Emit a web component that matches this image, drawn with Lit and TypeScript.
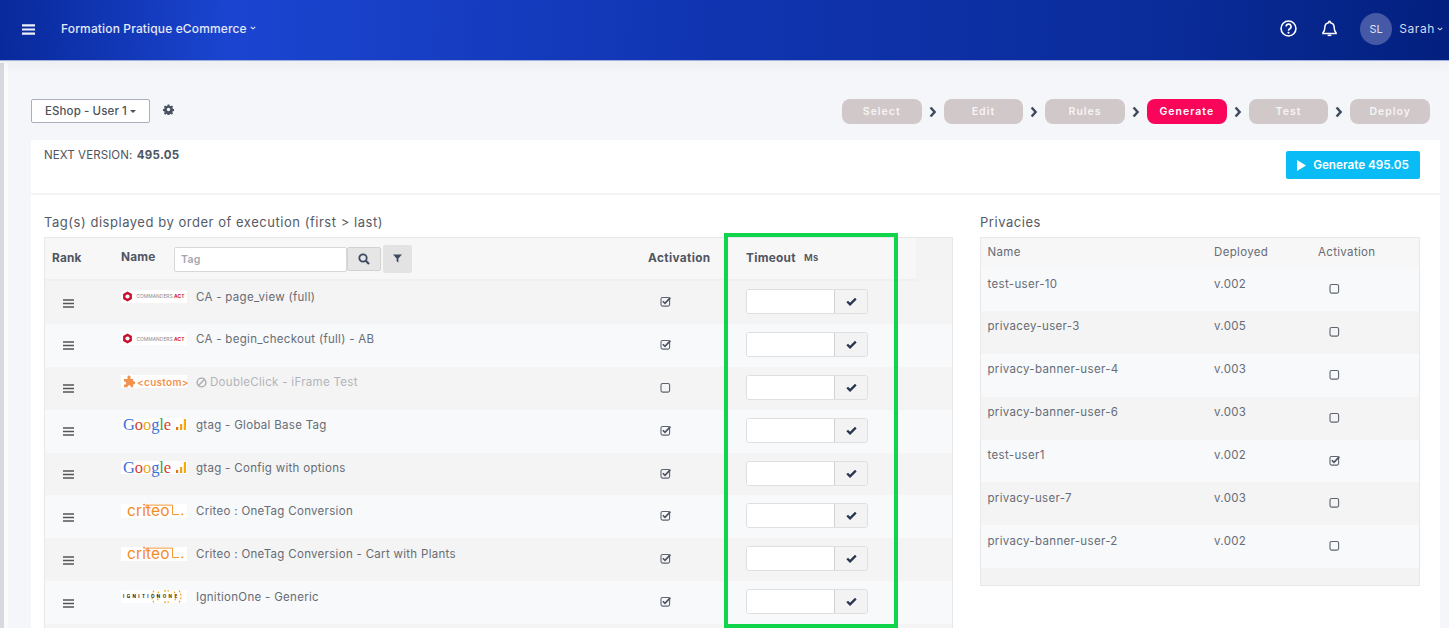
import { LitElement, html, css, svg } from "lit";
import { customElement } from "lit/decorators.js";

const burger = html`<svg class="burger" viewBox="0 0 11 9" width="11" height="9"><path d="M0 1h11M0 4.500h11M0 8h11" stroke="#555" stroke-width="1.500"/></svg>`;
const check = html`<svg viewBox="0 0 12 10" width="11" height="9"><path d="M1.200 5l3.200 3.200L10.800 1.800" fill="none" stroke="#2a3650" stroke-width="2.600"/></svg>`;
const box = (on: boolean) => html`<svg class="box" viewBox="0 0 11 11" width="11" height="11"><rect x="1" y="1.500" width="8.600" height="8.600" rx="1.600" fill="none" stroke="#5d6470" stroke-width="1.100"/>${on ? svg`<path d="M2.800 5.200l2.200 2.200L10.400 1.600" fill="none" stroke="#4b5260" stroke-width="1.600"/>` : ""}</svg>`;
const chev = html`<svg class="chev" viewBox="0 0 8 11" width="8" height="12"><path d="M1.600 1l4 4.500-4 4.500" fill="none" stroke="#3f4a60" stroke-width="2.500"/></svg>`;
const mini = html`<svg viewBox="0 0 8 5" width="6" height="4"><path d="M1 1l3 2.600L7 1" fill="none" stroke="currentColor" stroke-width="1.500"/></svg>`;

const commanders = html`<span class="logo"><svg class="hex" viewBox="0 0 10 10" width="11" height="11"><path d="M5 .5l4 2.200v4.600L5 9.500 1 7.300V2.700z" fill="#c8102e"/><circle cx="5" cy="5" r="1.900" fill="#fff"/></svg><span class="ca">COMMANDERS <b>ACT</b></span></span>`;
const custom = html`<span class="logo"><svg viewBox="0 0 14 14" width="15" height="14"><path d="M5 1.500a1.600 1.600 0 0 1 3 0V4h2.600v2.300a1.600 1.600 0 1 1 0 3v3H8.200a1.600 1.600 0 1 0-3 0H1.500V9.600a1.600 1.600 0 1 0 0-3V4H5z" fill="#f3914d"/></svg><span class="cu">&lt;custom&gt;</span></span>`;
const bars = html`<svg viewBox="0 0 10 11" width="10" height="11"><rect x="0" y="8" width="2.200" height="3" fill="#e8710a"/><rect x="4" y="5" width="2.200" height="6" fill="#f0a020"/><rect x="7.800" y="0" width="2.400" height="11" fill="#f9ab00"/></svg>`;
const google = html`<span class="logo g"><span class="go"><i class="b">G</i><i class="r">o</i><i class="y">o</i><i class="b">g</i><i class="gr">l</i><i class="r">e</i></span>${bars}</span>`;
const criteo = html`<span class="logo cr"><span class="crt">criteo</span><svg viewBox="0 0 66 13" width="66" height="14"><path d="M25 3V.6h26.500V10H58" fill="none" stroke="#f48b1f" stroke-width=".9"/><rect x="60.500" y="9" width="1.700" height="1.700" fill="#f48b1f"/></svg></span>`;
const ignition = html`<span class="logo ig"><svg viewBox="0 0 66 13" width="66" height="13"><g fill="none" stroke="#e9a52a" stroke-width="1.200" stroke-dasharray="2 1.500"><path d="M33 .5a10 10 0 0 0 0 12M38 1.500a8 8 0 0 0 0 10M58 .5a10 10 0 0 1 0 12M53 1.500a8 8 0 0 1 0 10M43 .8h5M43 12.200h5"/></g></svg><span class="igt">IGNITION<b>ONE</b></span></span>`;

const tags = [
  { l: commanders, n: "CA - page_view (full)", on: true },
  { l: commanders, n: "CA - begin_checkout (full) - AB", on: true },
  { l: custom, n: "DoubleClick - iFrame Test", on: false, off: true },
  { l: google, n: "gtag - Global Base Tag", on: true },
  { l: google, n: "gtag - Config with options", on: true },
  { l: criteo, n: "Criteo : OneTag Conversion", on: true },
  { l: criteo, n: "Criteo : OneTag Conversion - Cart with Plants", on: true },
  { l: ignition, n: "IgnitionOne - Generic", on: true },
];
const privacies = [
  ["test-user-10", "v.002", false], ["privacey-user-3", "v.005", false], ["privacy-banner-user-4", "v.003", false],
  ["privacy-banner-user-6", "v.003", false], ["test-user1", "v.002", true], ["privacy-user-7", "v.003", false],
  ["privacy-banner-user-2", "v.002", false],
] as [string, string, boolean][];
const steps = ["Select", "Edit", "Rules", "Generate", "Test", "Deploy"];

@customElement("app-root")
export class AppRoot extends LitElement {
  static styles = css`
    :host { display: block; position: relative; height: 628px; overflow: hidden; background: #f5f6f9; font-family: Inter, "Liberation Sans", sans-serif; color: #555b66; }
    * { box-sizing: border-box; }
    .top { position: relative; height: 61px; display: flex; align-items: center; background: linear-gradient(92deg, #08299a 0%, #1b45d1 16%, #1034b0 50%, #0a2c9a 80%, #03207f 100%); color: #e4e8f7; padding: 0 6px 0 22px; border-bottom: 1px solid #9fb0dd; box-shadow: 0 3px 12px rgba(60,70,110,.06); }
    .menu { margin-right: 26px; display: block; margin-top: -2px; }
    .brand { font-size: 12px; font-weight: 500; letter-spacing: .14px; display: flex; align-items: center; gap: 3px; margin-top: -4px; }
    .right { margin-left: auto; display: flex; align-items: center; margin-top: -3px; }
    .bell { margin: 0 23px 0 25px; display: block; }
    .avatar { width: 32px; height: 32px; border-radius: 50%; background: #4559a6; color: #dfe3f2; font-size: 11px; display: flex; align-items: center; justify-content: center; margin-right: 7px; }
    .user { font-size: 12px; letter-spacing: .6px; display: flex; align-items: center; gap: 2px; color: #d3d9ef; }
    .main { display: flex; height: 567px; }
    .rail { width: 8px; background: linear-gradient(90deg, #d6d9dd 0 4px, #fbfbfc 4px); margin-top: 2px; flex: none; }
    .content { flex: 1; padding: 38px 9px 0 23px; min-width: 0; }
    .bar { display: flex; align-items: flex-start; height: 25px; margin-bottom: 16px; }
    .env { width: 119px; height: 24px; background: #fff; border: 1px solid #aab0bb; border-radius: 2px; display: flex; align-items: center; justify-content: center; gap: 3px; font-size: 11.500px; font-weight: 500; letter-spacing: .1px; color: #4d535e; }
    .caret { width: 0; height: 0; border: 3.500px solid transparent; border-top-color: #4d535e; border-bottom: 0; }
    .gear { margin: 5px 0 0 13px; display: block; }
    .steps { margin-left: auto; margin-right: 10px; display: flex; align-items: center; gap: 7px; }
    .step { width: 79.700px; height: 25px; border-radius: 8px; background: #d0c8c9; color: #f7f4f4; font-size: 10.500px; font-weight: 600; letter-spacing: 1px; display: flex; align-items: center; justify-content: center; }
    .step.on { background: #f9065a; color: #fff; }
    .card { background: #fff; height: 520px; }
    .head { height: 55px; border-bottom: 2px solid #f3f3f4; padding: 8px 20px 0 13px; display: flex; justify-content: space-between; align-items: flex-start; }
    .ver { font-size: 11.500px; letter-spacing: .1px; color: #4f5561; line-height: 14px; }
    .ver b { font-weight: 700; letter-spacing: .3px; margin-left: 1px; }
    .gen { width: 134px; height: 28px; margin-top: 3px; background: #0abcf5; color: #fff; border-radius: 2px; font-size: 11.700px; font-weight: 600; display: flex; align-items: center; justify-content: center; gap: 7px; }
    .cols { display: flex; padding: 0 20px 0 13px; gap: 27px; }
    .left { width: 909px; flex: none; }
    .rightc { flex: 1; min-width: 0; }
    h2 { margin: 0; font-size: 13px; font-weight: 400; color: #555b66; height: 42px; padding-top: 20px; line-height: 15px; letter-spacing: .53px; white-space: nowrap; }
    .tbl { border: 1px solid #e7e7e8; background: #f3f3f3; }
    .thead { width: 871px; height: 43px; background: #f7f7f7; border-bottom: 2px solid #f0f0f0; display: grid; grid-template-columns: 76px 527px 98px 1fr; align-items: center; font-size: 11.800px; font-weight: 700; letter-spacing: .2px; color: #4f5561; padding-left: 7px; }
    .rankh { margin-top: -2px; }
    .namehead { display: flex; align-items: center; margin-left: -7px; }
    .namehead span { margin-top: -3px; width: 53px; }
    .search { width: 173px; height: 25px; background: #fff; border: 1px solid #d8d8da; border-radius: 2px; font-size: 10.500px; font-weight: 600; letter-spacing: .3px; color: #a4a8b0; display: flex; align-items: center; padding-left: 6px; margin-top: 2px; }
    .sbtn { width: 34px; height: 24px; background: #e6e6e6; border: 1px solid #d2d2d3; border-radius: 2px; display: flex; align-items: center; justify-content: center; margin-top: 1px; }
    .fbtn { width: 29px; height: 28px; margin-left: 2px; background: #e3e3e3; border-radius: 2px; display: flex; align-items: center; justify-content: center; }
    .acth { margin-left: -7px; letter-spacing: .36px; margin-top: -2px; }
    .toh { margin-left: -7px; display: flex; align-items: center; gap: 8px; letter-spacing: .3px; margin-top: -2px; }
    .toh small { font-size: 9.500px; font-weight: 600; }
    .row { height: 42.900px; display: grid; grid-template-columns: 76px 527px 98px 1fr; background: #f8f9fb; font-size: 11.500px; letter-spacing: .3px; color: #676c76; }
    .row:nth-child(odd) { background: #f4f4f4; }
    .rk { padding: 17.500px 0 0 18px; }
    .burger { display: block; }
    .nm { padding-top: 8.500px; display: flex; align-items: flex-start; gap: 9px; }
    .nm .t { line-height: 14px; display: flex; align-items: center; gap: 3px; white-space: nowrap; }
    .row.dis .t { color: #b3b5ba; }
    .logo { position: relative; width: 66px; height: 13px; background: #fff; display: flex; align-items: center; flex: none; }
    .logo > svg:first-child { margin-left: 1px; flex: none; }
    .ca { font-size: 4.900px; color: #8a8d94; margin-left: 3.500px; letter-spacing: .02px; white-space: nowrap; }
    .ca b { color: #d0172f; }
    .cu { font-size: 10px; color: #f3914d; font-weight: 600; margin-left: 0; }
    .g { justify-content: space-between; padding: 0 1px 0 2px; }
    .go { font-family: "Liberation Serif", serif; font-size: 16.500px; line-height: 13px; letter-spacing: -.1px; }
    .go i { font-style: normal; }
    .go .b { color: #3a6fd8; } .go .r { color: #d8402f; } .go .y { color: #e8a91c; } .go .gr { color: #3f9e45; }
    .cr { height: 14px; }
    .cr > svg:last-child { position: absolute; left: 0; top: 0; }
    .crt { color: #f48b1f; font-size: 15.500px; font-weight: 400; margin-left: 6px; letter-spacing: .1px; line-height: 14px; }
    .ig > svg:first-child { position: absolute; left: 0; top: 0; margin: 0; }
    .igt { position: relative; font-size: 4.500px; font-weight: 700; color: #222; letter-spacing: 2.400px; margin-left: 2px; white-space: nowrap; }
    .igt b { color: #7c5a14; }
    .ac { padding: 15px 0 0 11.500px; }
    .box { display: block; }
    .to { padding: 8px 0 0 0; }
    .ig2 { width: 122px; height: 25px; display: flex; border: 1px solid #dedfe0; border-radius: 3px; overflow: hidden; }
    .ig2 .in { width: 88px; background: #fff; border-right: 1px solid #cfd0d2; }
    .ig2 .ok { flex: 1; background: #f3f3f3; display: flex; align-items: center; justify-content: center; }
    .rt { border: 1px solid #e7e7e8; background: #f3f3f3; height: 349px; }
    .rh, .rr { display: grid; grid-template-columns: 226.500px 104px 1fr; padding-left: 6.500px; font-size: 11.500px; letter-spacing: .33px; color: #676c76; }
    .rh { height: 30px; background: #f7f7f7; align-items: center; padding-bottom: 2px; }
    .rr { height: 42.900px; background: #f4f4f4; padding-top: 8.500px; line-height: 14px; }
    .rr:nth-child(odd) { background: #f8f9fb; }
    .rr .b { padding: 6.500px 0 0 10.500px; }
    .mark { position: absolute; left: 724px; top: 233px; width: 174px; height: 395px; border: 4px solid #10d44b; pointer-events: none; }
  `;

  render() {
    return html`
      <div class="top">
        <svg class="menu" viewBox="0 0 13 11" width="13" height="11"><path d="M0 1.400h13M0 5.500h13M0 9.600h13" stroke="#eef1fb" stroke-width="2.200"/></svg>
        <div class="brand">Formation Pratique eCommerce ${mini}</div>
        <div class="right">
          <svg viewBox="0 0 16 16" width="17" height="17"><circle cx="8" cy="8" r="7" fill="none" stroke="#fff" stroke-width="1.500"/><path d="M5.800 6.200a2.300 2.300 0 1 1 3.400 2c-.8.500-1.200.9-1.200 1.800" fill="none" stroke="#fff" stroke-width="1.500"/><circle cx="8" cy="12" r="1" fill="#fff"/></svg>
          <svg class="bell" viewBox="0 0 16 18" width="15" height="17"><path d="M8 1.200a1 1 0 0 1 1 1v.6c2.500.5 4 2.500 4 5 0 3.500 1 4.800 2 5.800v.6H1v-.6c1-1 2-2.300 2-5.800 0-2.500 1.500-4.500 4-5v-.6a1 1 0 0 1 1-1z" fill="none" stroke="#fff" stroke-width="1.600"/><path d="M6 16.300h4" stroke="#fff" stroke-width="1.600"/></svg>
          <div class="avatar">SL</div>
          <div class="user">Sarah ${mini}</div>
        </div>
      </div>
      <div class="main">
        <div class="rail"></div>
        <div class="content">
          <div class="bar">
            <div class="env">EShop - User 1 <span class="caret"></span></div>
            <svg class="gear" viewBox="0 0 24 24" width="11" height="11"><path d="M10 1h4l.6 3 2 .9 2.600-1.700 2.800 2.800-1.700 2.600.9 2 3 .6v4l-3 .6-.9 2 1.700 2.600-2.800 2.800-2.600-1.700-2 .9-.6 3h-4l-.6-3-2-.9-2.600 1.700-2.800-2.800 1.700-2.600-.9-2-3-.6v-4l3-.6.9-2L2 6l2.800-2.800 2.600 1.700 2-.9z" fill="#4a5160"/><circle cx="12" cy="12" r="3.600" fill="#f5f6f9"/></svg>
            <div class="steps">
              ${steps.map((s, i) => html`${i ? chev : ""}<div class="step ${s === "Generate" ? "on" : ""}">${s}</div>`)}
            </div>
          </div>
          <div class="card">
            <div class="head">
              <div class="ver">NEXT VERSION: <b>495.05</b></div>
              <div class="gen"><svg viewBox="0 0 9 11" width="9" height="11"><path d="M0 0l9 5.500L0 11z" fill="#fff"/></svg>Generate 495.05</div>
            </div>
            <div class="cols">
              <div class="left">
                <h2>Tag(s) displayed by order of execution (first &gt; last)</h2>
                <div class="tbl">
                  <div class="thead">
                    <div class="rankh">Rank</div>
                    <div class="namehead"><span>Name</span>
                      <div class="search">Tag</div>
                      <div class="sbtn"><svg viewBox="0 0 12 12" width="12" height="12"><circle cx="5" cy="5" r="3.700" fill="none" stroke="#3f4a60" stroke-width="1.800"/><path d="M7.800 7.800L11 11" stroke="#3f4a60" stroke-width="2.200"/></svg></div>
                      <div class="fbtn"><svg viewBox="0 0 10 10" width="9" height="9"><path d="M0 .5h10L6 5v4.500L4 8V5z" fill="#3f4a60"/></svg></div>
                    </div>
                    <div class="acth">Activation</div>
                    <div class="toh">Timeout <small>Ms</small></div>
                  </div>
                  <div class="rows">
                    ${tags.map((t) => html`
                      <div class="row ${t.off ? "dis" : ""}">
                        <div class="rk">${burger}</div>
                        <div class="nm">${t.l}<span class="t">${t.off ? html`<svg viewBox="0 0 12 12" width="11" height="11"><circle cx="6" cy="6" r="4.800" fill="none" stroke="#a8aaaf" stroke-width="1.500"/><path d="M2.800 9.200l6.400-6.400" stroke="#a8aaaf" stroke-width="1.500"/></svg>` : ""}${t.n}</span></div>
                        <div class="ac">${box(t.on)}</div>
                        <div class="to"><div class="ig2"><div class="in"></div><div class="ok">${check}</div></div></div>
                      </div>`)}
                    <div class="row"></div>
                  </div>
                </div>
              </div>
              <div class="rightc">
                <h2>Privacies</h2>
                <div class="rt">
                  <div class="rh"><div>Name</div><div>Deployed</div><div>Activation</div></div>
                  <div class="rrs">
                    ${privacies.map((p) => html`
                      <div class="rr"><div>${p[0]}</div><div>${p[1]}</div><div class="b">${box(p[2])}</div></div>`)}
                  </div>
                </div>
              </div>
            </div>
          </div>
        </div>
      </div>
      <div class="mark"></div>
    `;
  }
}
